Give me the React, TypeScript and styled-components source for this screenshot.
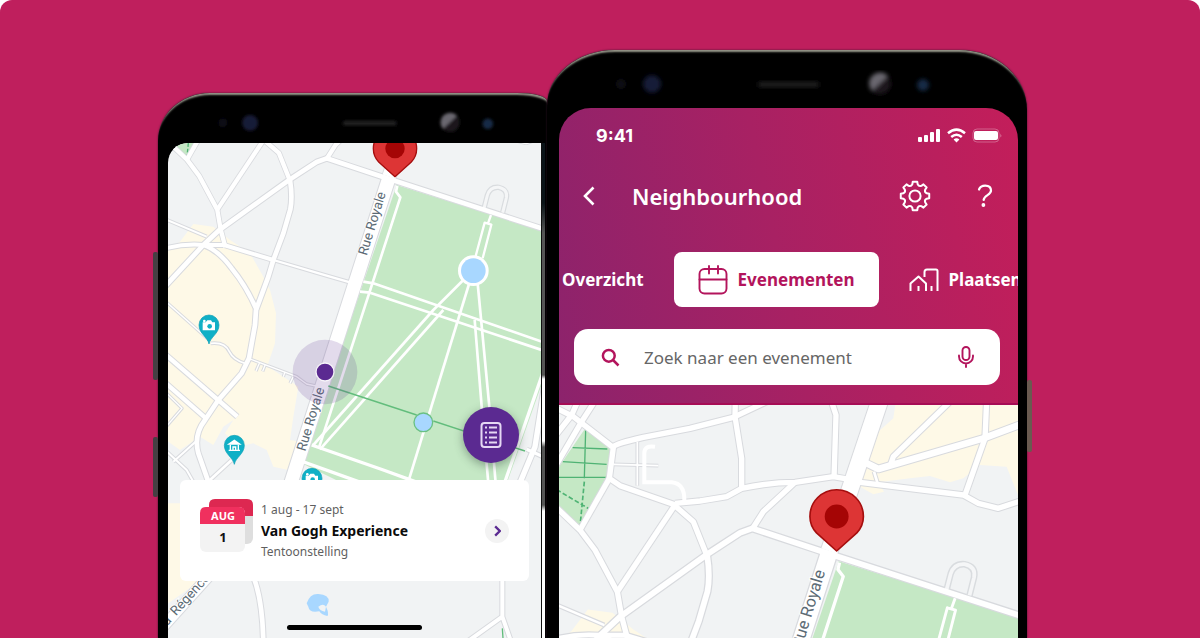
import React from "react";
import styled, { createGlobalStyle } from "styled-components";

const GlobalStyle = createGlobalStyle`
  *, *::before, *::after { box-sizing: border-box; }
  body { margin: 0; background: #fff; }
  button, input { font: inherit; color: inherit; border: 0; padding: 0; margin: 0; background: none; }
  button { cursor: pointer; }
`;

const sans = `"Noto Sans", "Open Sans", sans-serif`;
const magenta = "#b3145c";

const Stage = styled.main`
  display: grid;
  grid-template-columns: minmax(0, 389fr) minmax(0, 480fr);
  min-height: 100vh;
  padding: 0 173px 0 158px;
  border-radius: 12px 12px 0 0;
  background: #bf1f5d;
  font-family: ${sans};
  overflow: hidden;
`;

const Phone = styled.section<{ $top: number; $corner: string }>`
  position: relative;
  display: flex;
  flex-direction: column;
  margin-top: ${(p) => p.$top}px;
  border-radius: ${(p) => p.$corner};
  background: #000;
  box-shadow: inset 0 4px 2px -2px #96978a, 0 0 2px #35152c;
`;

const SideButton = styled.span<{ $top: number; $height: number; $side: "left" | "right" }>`
  position: absolute;
  ${(p) => p.$side}: -5px;
  top: ${(p) => p.$top}px;
  width: 5px;
  height: ${(p) => p.$height}px;
  border-radius: 2px;
  background: ${(p) => (p.$side === "left" ? "#453f43" : "#6a5a50")};
`;

const Bezel = styled.svg<{ $height: number }>`
  display: block;
  flex: none;
  width: 100%;
  height: ${(p) => p.$height}px;
`;

const Body = styled.div<{ $left: number; $right: number }>`
  display: flex;
  flex: 1;
  padding: 0 ${(p) => p.$right}px 0 ${(p) => p.$left}px;
`;

const Screen = styled.div<{ $radius: string }>`
  position: relative;
  display: flex;
  flex: 1;
  flex-direction: column;
  min-width: 0;
  overflow: hidden;
  border-radius: ${(p) => p.$radius};
`;

const Rail = styled.div`
  width: 6px;
  border-left: 1px solid #111;
  border-right: 2px solid #000;
  background: linear-gradient(#0b1418 0 60px, #555 90px 232px, #fff 236px 298px, #555 304px 362px, #fff 368px);
`;

const MapArea = styled.div`
  position: relative;
  flex: 1;
  min-height: 200px;
  background: #f1f3f4;
`;

const MapSvg = styled.svg`
  position: absolute;
  inset: 0;
  width: 100%;
  height: 100%;
`;

const Overlay = styled.div`
  position: absolute;
  inset: 0;
  display: flex;
  flex-direction: column;
  justify-content: flex-end;
  padding: 0 12px 8px;
`;

const ListButton = styled.button`
  display: grid;
  place-items: center;
  align-self: flex-end;
  width: 56px;
  height: 56px;
  margin: 0 10px 17px 0;
  border-radius: 50%;
  background: #5b2a91;
  box-shadow: 0 3px 10px rgba(50, 70, 60, 0.45);
`;

const EventCard = styled.article`
  display: flex;
  align-items: flex-start;
  gap: 8px;
  height: 101px;
  padding: 19px 20px;
  border-radius: 6px;
  background: #fff;
`;

const EventText = styled.div`
  flex: 1;
  min-width: 0;
  white-space: nowrap;
`;

const Meta = styled.p`
  margin: 0;
  color: #5f5f5f;
  font-size: 12px;
  line-height: 21px;
`;

const EventTitle = styled.h3`
  margin: 0;
  color: #0b0b0b;
  font-size: 14px;
  font-weight: 700;
  line-height: 21px;
`;

const OpenButton = styled.button`
  display: grid;
  place-items: center;
  align-self: center;
  width: 24px;
  height: 24px;
  border-radius: 50%;
  background: #f3f3f3;
`;

const HomeBar = styled.div`
  align-self: center;
  width: 135px;
  height: 5px;
  margin-top: 44px;
  border-radius: 3px;
  background: #000;
`;

const Header = styled.header`
  padding-bottom: 18px;
  border-bottom: 2px solid #a60c55;
  background: linear-gradient(78deg, #8c236c 0%, #a82163 48%, #c31e5a 100%);
  color: #fff;
`;

const StatusBar = styled.div`
  display: flex;
  align-items: center;
  gap: 6px;
  height: 54px;
  padding: 0 16px 0 37px;
`;

const Clock = styled.time`
  flex: 1;
  font-family: Inter, sans-serif;
  font-size: 18px;
  font-weight: 700;
`;

const NavBar = styled.nav`
  display: flex;
  align-items: center;
  height: 68px;
  padding: 0 17px 0 14px;
`;

const IconButton = styled.button`
  display: grid;
  place-items: center;
  width: 32px;
  height: 32px;
`;

const Actions = styled.div`
  display: flex;
  gap: 38px;
`;

const Title = styled.h1`
  flex: 1;
  margin: 0 0 0 27px;
  font-size: 22px;
  font-weight: 600;
  line-height: 32px;
`;

const Tabs = styled.div`
  display: flex;
  gap: 30px;
  margin-top: 22px;
  padding-left: 3px;
  overflow: hidden;
`;

const Tab = styled.button<{ $active?: boolean }>`
  display: flex;
  flex: none;
  align-items: center;
  gap: 10px;
  height: 55px;
  padding: 0 ${(p) => (p.$active ? 24 : 0)}px;
  border-radius: 8px;
  background: ${(p) => (p.$active ? "#fff" : "none")};
  color: ${(p) => (p.$active ? magenta : "#fff")};
  font-size: 17px;
  font-weight: 700;
`;

const Search = styled.label`
  display: flex;
  align-items: center;
  height: 56px;
  margin: 22px 18px 0 15px;
  padding: 0 18px 0 27px;
  border-radius: 14px;
  background: #fff;
  color: ${magenta};
`;

const SearchInput = styled.input`
  flex: 1;
  min-width: 0;
  margin-left: 24px;
  outline: 0;
  color: #555;
  font-size: 17px;
  &::placeholder { color: #666; opacity: 1; }
`;

/* ---------- map ---------- */

type Road = { d: string; w: number };

const NORTH = "translate(735 290) scale(0.8104) translate(-860 -468)";
const LARGE = "translate(860 468) scale(1.234) translate(-735 -290)";

const northRoads: Road[] = [
  { d: "M838 468L990 15", w: 50 },
  { d: "M-10 25L70 65L190 158L178 250L210 272L370 328L430 380L470 480", w: 16 },
  { d: "M140 10L95 80L10 225", w: 16 },
  { d: "M85 15L65 60L10 130", w: 16 },
  { d: "M190 155Q200 145 280 127L420 100L550 67L650 20", w: 16 },
  { d: "M178 250L90 405", w: 16 },
  { d: "M-20 300L27 345L90 405L135 465L202 590L215 665L232 729", w: 16 },
  { d: "M375 330L202 590", w: 16 },
  { d: "M556 15L555 65L575 190L575 280", w: 16 },
  { d: "M375 325L450 318L530 305L575 280Q660 262 735 262L850 245L890 252", w: 16 },
  { d: "M843 15L858 60L852 250", w: 16 },
  { d: "M735 262L640 350L607 402", w: 16 },
  { d: "M930 262L1240 300L1285 325L1345 340L1420 315", w: 16 },
  { d: "M1245 300L1305 130L1310 15", w: 16 },
  { d: "M950 205L985 222L1300 130L1420 85", w: 20 },
  { d: "M1205 15L1030 185L1020 215", w: 16 },
  { d: "M972 230L982 262", w: 8 },
  { d: "M262 140L262 272", w: 5 },
  { d: "M190 208L325 212", w: 5 },
];

const courtyard = "M315 155Q283 150 283 175L283 262L365 262Q405 266 403 318";

const roads: Road[] = [
  { d: "M718 290L420 1217L300 1410", w: 40 },
  { d: "M420 300Q428 350 421 388L400 460L370 540L355 590L318 690L315 735L297 835L275 880L205 960L165 1020Q130 1065 145 1120L175 1205L310 1490Q338 1560 340 1690", w: 14 },
  { d: "M40 625L160 495L208 450L420 298L500 246L530 235L690 288L1190 450", w: 14 },
  { d: "M40 507Q100 490 160 495L222 495L370 540", w: 12 },
  { d: "M160 495Q205 510 245 565Q290 620 320 690", w: 13 },
  { d: "M370 540L540 590L600 607", w: 7 },
  { d: "M40 415L170 470", w: 6 },
  { d: "M40 818L262 1010", w: 13 },
  { d: "M40 903L168 1015", w: 13 },
  { d: "M40 658L177 780", w: 4 },
  { d: "M182 790Q225 785 238 815Q250 840 285 850", w: 5 },
  { d: "M300 837L440 890L470 912L530 925M328 850L318 873M345 856L338 874M405 875L400 890M430 890L420 910", w: 4 },
  { d: "M40 930L96 985L40 1050", w: 4 },
  { d: "M40 1105L110 1170L130 1205M145 1078L70 1145", w: 6 },
  { d: "M245 1140L180 1200", w: 8 },
  { d: "M175 1490L40 1640", w: 30 },
  { d: "M1057 1490L1057 1610L945 1690M1057 1610L1085 1690", w: 12 },
  { d: "M1190 880L1155 1100L1105 1220", w: 16 },
  { d: "M1130 1108L1190 1135", w: 10 },
];

const paths: Road[] = [
  { d: "M742 318L738 335L751 352L508 1100", w: 8 },
  { d: "M640 605L670 610L1190 790M630 635L660 638L1190 815", w: 8 },
  { d: "M970 570L850 690L490 1095M880 690L510 1108", w: 8 },
  { d: "M970 570L775 1205", w: 8 },
  { d: "M982 600L1018 980L1037 1210M974 720L995 980L1015 1210", w: 8 },
  { d: "M1023 405L1014 430M976 532L1004 428L1024 434L998 535", w: 7 },
  { d: "M485 1095L700 1170L810 1210M445 1140L640 1210", w: 10 },
  { d: "M1185 860L1065 1205", w: 10 },
];

const RoadLayer = ({ list, casing }: { list: Road[]; casing?: boolean }) => (
  <g fill="none" stroke={casing ? "#d8dade" : "#fff"} strokeLinejoin="round">
    {list.map((r) => (
      <path key={r.d} d={r.d} strokeWidth={casing ? r.w + 6 : r.w} />
    ))}
  </g>
);

const TealPin = ({ x, y, children }: { x: number; y: number; children: React.ReactNode }) => (
  <g transform={`translate(${x} ${y})`}>
    <path d="M0 57C-4 36-30 26-30 0A30 30 0 0 1 30 0C30 26 4 36 0 57Z" fill="#10b0c6" stroke="#0a9fb5" strokeWidth="2" />
    {children}
  </g>
);

const Camera = () => (
  <g>
    <path d="M-19-8H-10L-5-14H6L10-8H18V16H-19Z" fill="#fff" />
    <circle cx="2" cy="4" r="7" fill="#10b0c6" />
    <circle cx="-14" cy="-12" r="4" fill="#fff" />
  </g>
);

const Museum = () => (
  <g fill="none" stroke="#fff" strokeWidth="4">
    <path d="M-16-4L0-15L16-4Z" fill="#fff" />
    <path d="M-12-2V14M12-2V14M-17 15H17M-4 13V5H4V13" />
  </g>
);

const CityMap = () => (
  <g>
    <g transform={NORTH}>
      <path d="M1038 15L1030 70L985 110L958 190L945 225L930 275L970 298L1002 290L985 262L1080 250L1140 243L1200 262L1240 250L1290 210L1370 215L1404 300L1420 300V15Z" fill="#fef9e7" />
      <path d="M107 98L182 160L172 250L90 395L10 320V240Z" fill="#c5e8c5" />
      <g stroke="#4fb374" strokeWidth="5" fill="none">
        <path d="M107 105L103 250M68 158L172 162M38 200L170 208M27 247H170" strokeWidth="4" />
        <path d="M103 260L90 395M20 284L118 342" strokeDasharray="14 7" />
      </g>
    </g>
    <path d="M40 520L90 485L130 432L190 440L240 480L300 520L340 590L360 630L378 700L375 790L352 858L445 920L430 1010L420 1080L450 1085L430 1130L415 1170L370 1160L350 1110L310 1090L265 1100L225 1060L250 1020L220 1040L190 1095L150 1070L90 1110L40 1075Z" fill="#fef9e7" />
    <path d="M40 1270H120L140 1510L40 1580Z" fill="#fef9e7" />
    <path d="M740 315L1190 455V870L1060 1240H640L455 1150Z" fill="#c5e8c5" />
    <RoadLayer list={roads} casing />
    <g transform={NORTH}><RoadLayer list={northRoads} casing /></g>
    <path d="M1002 385L1012 346Q1020 320 1046 322Q1074 328 1069 354L1058 398" fill="none" stroke="#d9dcdf" strokeWidth="16" />
    <path d="M1002 385L1012 346Q1020 320 1046 322Q1074 328 1069 354L1058 398" fill="none" stroke="#f5f6f7" strokeWidth="9" />
    <RoadLayer list={roads} />
    <g transform={NORTH}>
      <RoadLayer list={northRoads} />
      <path d={courtyard} fill="none" stroke="#fff" strokeWidth="12" />
    </g>
    <RoadLayer list={paths} />
    <circle cx="970" cy="572" r="46" fill="#fff" />
    <circle cx="970" cy="572" r="37" fill="#a8d7ff" />
    <path d="M535 918L800 1005M850 1023L1125 1113M1057 1645L1060 1690" stroke="#62bd7c" strokeWidth="4" />
    <circle cx="820" cy="1027" r="28" fill="#a8d7ff" stroke="#6ac083" strokeWidth="4" />
    <path d="M470 1570Q480 1540 505 1542Q538 1544 536 1565L528 1580Q538 1600 532 1608Q515 1605 508 1594Q478 1600 475 1580Z" fill="#a8d7ff" />
    <path d="M505 1580Q520 1568 528 1580L525 1595Q508 1592 505 1580Z" fill="#f1f3f4" />
    <g fill="#5c6b75" fontFamily="Roboto, sans-serif" fontSize="40" stroke="#fff" strokeWidth="5" paintOrder="stroke">
      <text transform="translate(650 528) rotate(-73)">Rue Royale</text>
      <text transform="translate(466 1115) rotate(-73)">Rue Royale</text>
      <text transform="translate(78 1609) rotate(-48)">Régence</text>
      <text transform="translate(45 1646) rotate(-48)">la</text>
    </g>
    <TealPin x={177} y={735}><Camera /></TealPin>
    <TealPin x={253} y={1096}><Museum /></TealPin>
    <TealPin x={486} y={1195}><Camera /></TealPin>
    <path d="M735 290L686 246C675 234 670 222 670 206A65 65 0 0 1 800 206C800 222 795 234 784 246Z" fill="#dd3535" stroke="#a50e0e" strokeWidth="4" strokeLinejoin="round" />
    <circle cx="735" cy="206" r="29" fill="#a50505" />
  </g>
);

/* ---------- small drawings ---------- */

const Sensors = ({ id }: { id: string }) => (
  <>
    <defs>
      <filter id={id}><feGaussianBlur stdDeviation="2" /></filter>
    </defs>
    <g filter={`url(#${id})`}>
      <circle cx="74" cy="34" r="5" fill="#0e1012" />
      <circle cx="105" cy="34" r="9" fill="#141a38" />
      <rect x="211" y="32" width="61" height="5" rx="2" fill="#222224" />
      <path d="M325 41A10 10 0 0 1 341 26Z" fill="#6a6770" />
      <path d="M325 41L341 26A10 10 0 0 1 325 41Z" fill="#1a171d" />
      <circle cx="376" cy="35" r="6" fill="#182c46" />
    </g>
  </>
);

const point = (deg: number, r: number) => {
  const a = (deg * Math.PI) / 180;
  return `${(16 + r * Math.cos(a)).toFixed(2)} ${(16 + r * Math.sin(a)).toFixed(2)}`;
};

const gearPath =
  Array.from({ length: 8 }, (_, i) => {
    const t = i * 45;
    return `${i ? "L" : "M"}${point(t - 9, 14.4)}L${point(t + 9, 14.4)}L${point(t + 13, 12)}Q${point(t + 22.5, 10)} ${point(t + 32, 12)}`;
  }).join("") + "Z";

const Gear = () => (
  <svg width="32" height="32" viewBox="0 0 32 32" fill="none" stroke="currentColor" strokeWidth="2" strokeLinejoin="round">
    <path d={gearPath} />
    <circle cx="16" cy="16" r="5.6" />
  </svg>
);

const Question = () => (
  <svg width="16" height="24" viewBox="0 0 16 24" fill="none" stroke="currentColor" strokeWidth="2.2" strokeLinecap="round" strokeLinejoin="round">
    <path d="M2 5.5C3 2.8 5.4 1.6 8.2 1.6C11.8 1.6 14 3.6 14 6.6C14 11.4 7.2 10.8 6.6 16" />
    <circle cx="6.4" cy="21" r="0.8" fill="currentColor" />
  </svg>
);

const Chevron = ({ flip, w, h, sw }: { flip?: boolean; w: number; h: number; sw: number }) => (
  <svg width={w} height={h} viewBox="0 0 12 20" fill="none" stroke={flip ? "#5b2a91" : "#fff"} strokeWidth={sw}>
    <path d={flip ? "M2 2L10 10L2 18" : "M10.500 1.500L2 10L10.500 18.500"} />
  </svg>
);

const CalendarIcon = () => (
  <svg width="30" height="30" viewBox="0 0 30 30" fill="none" stroke="currentColor" strokeWidth="1.900" strokeLinecap="round">
    <rect x="1.500" y="4" width="27" height="24.500" rx="5" />
    <path d="M1.500 14.500H28.500M11 1V8.500M20 1V8.500" />
  </svg>
);

const PlacesIcon = () => (
  <svg width="30" height="24" viewBox="0 0 30 24" fill="none" stroke="currentColor" strokeWidth="2" strokeLinejoin="round">
    <path d="M1.500 23V15.500L9.500 8.500L17 15.500V23M28.500 23V3Q28.500 1.500 27 1.500H18Q15.500 1.500 15.500 4V9" />
    <path d="M9.500 18V23M22.500 18V23" />
  </svg>
);

const SearchIcon = () => (
  <svg width="19" height="19" viewBox="0 0 19 19" fill="none" stroke="currentColor" strokeWidth="2.500">
    <circle cx="7.800" cy="7.800" r="5.900" />
    <path d="M12 12L17.500 17.500" />
  </svg>
);

const MicIcon = () => (
  <svg width="16" height="22" viewBox="0 0 16 22" fill="none" stroke="currentColor" strokeWidth="1.900" strokeLinecap="round">
    <rect x="4.500" y="1" width="7" height="13" rx="3.500" />
    <path d="M1 9.500V10.500A7 7 0 0 0 15 10.500V9.500M8 17.500V21" />
  </svg>
);

const ListIcon = () => (
  <svg width="22" height="28" viewBox="0 0 22 28" fill="none" stroke="#e6d8f4" strokeWidth="2">
    <rect x="1.500" y="2" width="19" height="24" rx="3" />
    <path d="M9 6.500H17M9 11.500H17M9 16.500H17M9 21.500H17" strokeWidth="2" />
    <path d="M5 6.500H7M5 11.500H7M5 16.500H7M5 21.500H7" />
  </svg>
);

const Signal = () => (
  <svg width="23" height="15" viewBox="0 0 23 15" fill="currentColor">
    <rect x="0" y="9" width="4" height="5" rx="1" />
    <rect x="6" y="7" width="4" height="7" rx="1" />
    <rect x="12" y="4" width="4" height="10" rx="1" />
    <rect x="18" y="1" width="4" height="13" rx="1" />
  </svg>
);

const Wifi = () => (
  <svg width="19" height="15" viewBox="0 0 19 15" fill="none" stroke="currentColor" strokeWidth="2.500">
    <path d="M1 5.300Q9.500-2 18 5.300M4.200 9Q9.500 4.400 14.800 9" />
    <path d="M9.500 14.500L6.600 11.500Q9.500 9.200 12.400 11.500Z" fill="currentColor" stroke="none" />
  </svg>
);

const Battery = () => (
  <svg width="30" height="15" viewBox="0 0 30 15" fill="none">
    <rect x="1" y="1" width="26" height="13" rx="4" stroke="#fff" strokeOpacity="0.3" />
    <rect x="2" y="3" width="24" height="9" rx="2" fill="#fff" />
    <path d="M28.500 5.500Q30 7.500 28.500 9.500Z" fill="#fff" fillOpacity="0.5" />
  </svg>
);

const DateBadge = () => (
  <svg width="53" height="53" viewBox="0 0 53 53" fontFamily={sans} fontWeight="700" textAnchor="middle">
    <rect x="9" y="0" width="44" height="45" rx="6" fill="#dedede" />
    <path d="M9 17V6Q9 0 15 0H47Q53 0 53 6V17Z" fill="#dd2851" />
    <rect x="0" y="8" width="45" height="45" rx="6" fill="#f3f3f3" />
    <path d="M0 25V14Q0 8 6 8H39Q45 8 45 14V25Z" fill="#f0305e" />
    <text x="23" y="21" fontSize="11" fill="#fff">AUG</text>
    <text x="23" y="43" fontSize="13" fill="#111">1</text>
  </svg>
);

export default function App() {
  return (
    <>
      <GlobalStyle />
      <Stage>
        <Phone $top={93} $corner="52px 30px 0 0 / 48px 8px 0 0">
          <SideButton $side="left" $top={159} $height={128} />
          <SideButton $side="left" $top={344} $height={60} />
          <Bezel $height={50} viewBox="0 0 442 57" preserveAspectRatio="xMinYMin meet" aria-hidden="true">
            <Sensors id="soft-left" />
          </Bezel>
          <Body $left={10} $right={0}>
            <Screen $radius="20px 0 0 0">
              <MapArea>
                <MapSvg viewBox="54 189 1119 1485" preserveAspectRatio="xMidYMin slice" role="img" aria-label="Kaart">
                  <CityMap />
                  <circle cx="525" cy="876" r="97" fill="#5b2a91" fillOpacity="0.17" />
                  <circle cx="525" cy="876" r="29" fill="#fff" fillOpacity="0.75" />
                  <circle cx="525" cy="876" r="25" fill="#5b2a91" />
                </MapSvg>
                <Overlay>
                  <ListButton aria-label="Lijst"><ListIcon /></ListButton>
                  <EventCard>
                    <DateBadge />
                    <EventText>
                      <Meta>1 aug - 17 sept</Meta>
                      <EventTitle>Van Gogh Experience</EventTitle>
                      <Meta>Tentoonstelling</Meta>
                    </EventText>
                    <OpenButton aria-label="Open"><Chevron flip w={7} h={12} sw={4} /></OpenButton>
                  </EventCard>
                  <HomeBar />
                </Overlay>
              </MapArea>
            </Screen>
            <Rail />
          </Body>
        </Phone>

        <Phone $top={50} $corner="68px 68px 0 0 / 56px 60px 0 0">
          <SideButton $side="right" $top={330} $height={72} />
          <Bezel $height={58} viewBox="0 0 480 58" preserveAspectRatio="xMinYMin meet" aria-hidden="true">
            <Sensors id="soft-right" />
          </Bezel>
          <Body $left={12} $right={9}>
            <Screen $radius="32px 32px 0 0">
              <Header>
                <StatusBar>
                  <Clock>9:41</Clock>
                  <Signal />
                  <Wifi />
                  <Battery />
                </StatusBar>
                <NavBar>
                  <IconButton aria-label="Terug"><Chevron w={12} h={20} sw={2.6} /></IconButton>
                  <Title>Neighbourhood</Title>
                  <Actions>
                    <IconButton aria-label="Instellingen"><Gear /></IconButton>
                    <IconButton aria-label="Help"><Question /></IconButton>
                  </Actions>
                </NavBar>
                <Tabs>
                  <Tab>Overzicht</Tab>
                  <Tab $active><CalendarIcon />Evenementen</Tab>
                  <Tab><PlacesIcon />Plaatsen</Tab>
                </Tabs>
                <Search>
                  <SearchIcon />
                  <SearchInput type="text" aria-label="Zoek naar een evenement" placeholder="Zoek naar een evenement" />
                  <IconButton aria-label="Spreek"><MicIcon /></IconButton>
                </Search>
              </Header>
              <MapArea>
                <MapSvg viewBox="27 30 1377 699" preserveAspectRatio="xMidYMin slice" role="img" aria-label="Kaart">
                  <g transform={LARGE}><CityMap /></g>
                </MapSvg>
              </MapArea>
            </Screen>
          </Body>
        </Phone>
      </Stage>
    </>
  );
}
